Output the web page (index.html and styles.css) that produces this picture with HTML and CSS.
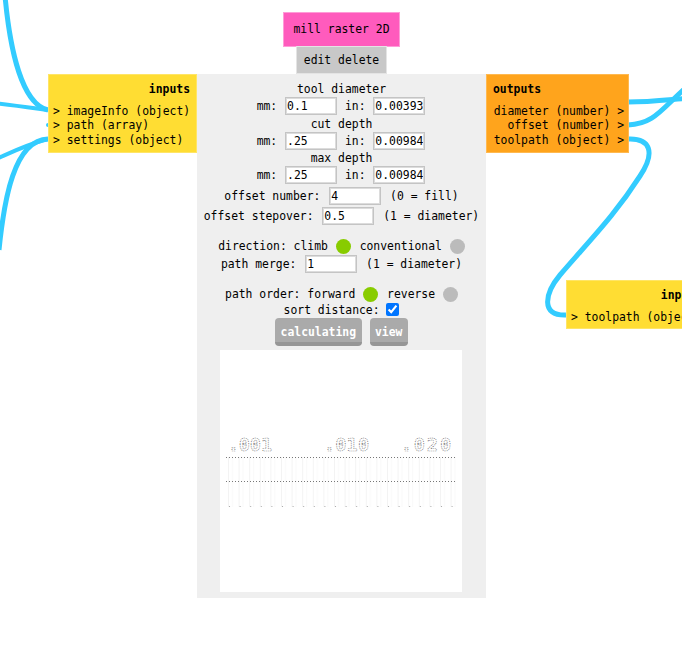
FILE: index.html
```html
<!DOCTYPE html>
<html lang="en">
<head>
    <meta charset="UTF-8">
    <meta name="viewport" content="width=device-width, initial-scale=1.0">
    <title>mill raster 2D</title>
    <link rel="stylesheet" href="styles.css">
</head>
<body>
    <div id="canvas">
        <!-- wires between the modules -->
        <svg class="wires" width="682" height="659" viewBox="0 0 682 659">
            <path d="M5 -4 C10 50 22 104 48 110"/>
            <path d="M-6 103 C12 105 26 107 48 110" class="thin"/>
            <path d="M-6 160 C10 153 25 145 48 139" class="thin"/>
            <path d="M-1 250 C4 200 14 140 48 139"/>
            <path d="M628 102 C650 102 665 100 690 98"/>
            <path d="M628 125 C655 124 662 108 690 84"/>
            <path d="M628 139 C650 138 656 152 640 176 C615 215 590 240 560 275 C545 293 540 316 566 315"/>
            <circle class="stub" cx="48" cy="125" r="2"/>
        </svg>

        <div class="module-name">mill raster 2D</div>
        <div class="module-actions">edit delete</div>

        <div class="io inputs main-inputs">
            <div class="io-title">inputs</div>
            <div>&gt; imageInfo (object)</div>
            <div>&gt; path (array)</div>
            <div>&gt; settings (object)</div>
        </div>

        <div class="panel">
            <div class="label">tool diameter</div>
            <div class="row pair">mm: <input type="text" value="0.1"> in: <input type="text" value="0.00393"></div>
            <div class="label gap-1">cut depth</div>
            <div class="row pair">mm: <input type="text" value=".25"> in: <input type="text" value="0.00984"></div>
            <div class="label">max depth</div>
            <div class="row pair">mm: <input type="text" value=".25"> in: <input type="text" value="0.00984"></div>
            <div class="row gap-3">offset number: <input type="text" value="4"> (0 = fill)</div>
            <div class="row gap-2">offset stepover: <input type="text" value="0.5"> (1 = diameter)</div>

            <div class="label gap-13">direction: climb <span class="radio on"></span> conventional <span class="radio"></span></div>
            <div class="row gap-1">path merge: <input type="text" value="1"> (1 = diameter)</div>

            <div class="label gap-13">path order: forward <span class="radio on"></span> reverse <span class="radio"></span></div>
            <div class="label">sort distance: <input type="checkbox" checked></div>

            <div class="buttons">
                <button>calculating</button>
                <button>view</button>
            </div>

            <svg class="preview" width="242" height="242" viewBox="0 0 242 242">
                <defs>
                    <pattern id="cuts" width="10.6" height="60" patternUnits="userSpaceOnUse" x="8">
                        <rect x="0" width="1" height="60" fill="#f3f3f3"/>
                        <rect x="4" width="1" height="60" fill="#f9f9f9"/>
                    </pattern>
                    <pattern id="dots" width="3" height="1" patternUnits="userSpaceOnUse" x="6">
                        <rect width="1" height="1" fill="#777"/>
                    </pattern>
                    <pattern id="ticks" width="10.6" height="3" patternUnits="userSpaceOnUse" x="9">
                        <rect width="1" height="2" fill="#aaa"/>
                    </pattern>
                </defs>
                <rect x="6" y="107" width="231" height="50" fill="url(#cuts)"/>
                <rect x="6" y="107" width="231" height="1" fill="url(#dots)"/>
                <rect x="6" y="131" width="231" height="1" fill="url(#dots)"/>
                <rect x="6" y="155" width="231" height="2" fill="url(#ticks)"/>
                <text class="legend" x="8" y="101" textLength="44">.001</text>
                <text class="legend" x="104" y="101" textLength="45">.010</text>
                <text class="legend" x="181" y="101" textLength="50">.020</text>
            </svg>
        </div>

        <div class="io outputs">
            <div class="io-title">outputs</div>
            <div>diameter (number) &gt;</div>
            <div>offset (number) &gt;</div>
            <div>toolpath (object) &gt;</div>
        </div>

        <div class="io inputs next-inputs">
            <div class="io-title">inputs</div>
            <div>&gt; toolpath (object)</div>
        </div>
    </div>
</body>
</html>
```

FILE: styles.css
```css
html, body {
    margin: 0;
    padding: 0;
    height: 100%;
    overflow: hidden;
    background-color: white;
}

#canvas {
    position: relative;
    width: 682px;
    height: 659px;
    overflow: hidden;
    font-family: "DejaVu Sans Mono", monospace;
    font-size: 11.4px;
    color: black;
}

.wires {
    position: absolute;
    left: 0;
    top: 0;
}

.wires path {
    fill: none;
    stroke: #33ccff;
    stroke-width: 5;
}

.wires .thin {
    stroke-width: 4;
}

.wires .stub {
    fill: #33ccff;
}

/* modules sit on a free canvas */
.module-name {
    position: absolute;
    left: 283px;
    top: 12px;
    width: 117px;
    height: 35px;
    box-sizing: border-box;
    border: 1px solid #ff9cd8;
    background-color: #ff5bbd;
    line-height: 33px;
    text-align: center;
}

.module-actions {
    position: absolute;
    left: 296px;
    top: 46px;
    width: 91px;
    height: 28px;
    box-sizing: border-box;
    border: 1px solid #e4e4e4;
    background-color: #c8c8c8;
    line-height: 26px;
    text-align: center;
}

.io {
    position: absolute;
    top: 74px;
    height: 79px;
    box-sizing: border-box;
    padding: 7px 6px 0 4px;
    line-height: 14.5px;
    white-space: nowrap;
}

.io-title {
    font-weight: bold;
    margin-bottom: 7px;
}

.inputs {
    background-color: #ffdd33;
    border: 1px solid #ffe566;
}

.inputs .io-title {
    text-align: right;
}

.main-inputs {
    left: 48px;
    width: 149px;
}

.next-inputs {
    left: 566px;
    top: 280px;
    width: 143px;
    height: 49px;
}

.outputs {
    left: 486px;
    width: 143px;
    background-color: #ffa41c;
    border: 1px solid #ffb950;
    text-align: right;
    padding-left: 6px;
    padding-right: 4px;
}

.outputs .io-title {
    text-align: left;
}

.panel {
    position: absolute;
    left: 197px;
    top: 74px;
    width: 289px;
    height: 524px;
    box-sizing: border-box;
    padding-top: 7px;
    background-color: #efefef;
    text-align: center;
    white-space: nowrap;
}

.label {
    height: 16px;
    line-height: 16px;
}

.row {
    height: 18px;
    line-height: 18px;
}

.gap-1 {
    margin-top: 1px;
}

.gap-2 {
    margin-top: 2px;
}

.gap-3 {
    margin-top: 3px;
}

.gap-13 {
    margin-top: 13px;
}

input[type="text"] {
    width: 52px;
    height: 18px;
    box-sizing: border-box;
    margin: 0 2px;
    padding: 1px;
    border: 1px solid #c4c4c4;
    outline: 1px solid #dcdcdc;
    outline-offset: -2px;
    background-color: white;
    font-family: "DejaVu Sans Mono", monospace;
    font-size: 11.4px;
    vertical-align: top;
}

.pair input[type="text"] {
    margin: 0 1px;
}

input[type="checkbox"] {
    width: 13px;
    height: 13px;
    margin: 0;
    vertical-align: -2px;
}

.radio {
    display: inline-block;
    width: 15px;
    height: 15px;
    margin-left: 1px;
    border-radius: 50%;
    background-color: #bbbbbb;
    vertical-align: -4px;
}

.radio.on {
    margin-right: 2px;
    background-color: #88cc00;
}

.buttons {
    display: flex;
    justify-content: center;
    gap: 8px;
}

button {
    height: 28px;
    padding: 3px 5.5px 0;
    border: none;
    border-bottom: 4px solid #969696;
    border-radius: 4px;
    background-color: #aaaaaa;
    color: white;
    font-family: "DejaVu Sans Mono", monospace;
    font-size: 11.4px;
    font-weight: bold;
}

.preview {
    display: block;
    margin: 4px 0 0 23px;
    background-color: white;
}

.legend {
    font-family: "DejaVu Sans Mono", monospace;
    font-size: 18px;
    font-weight: bold;
    fill: none;
    stroke: #666666;
    stroke-width: 0.7;
    stroke-dasharray: 1 1;
}
```
